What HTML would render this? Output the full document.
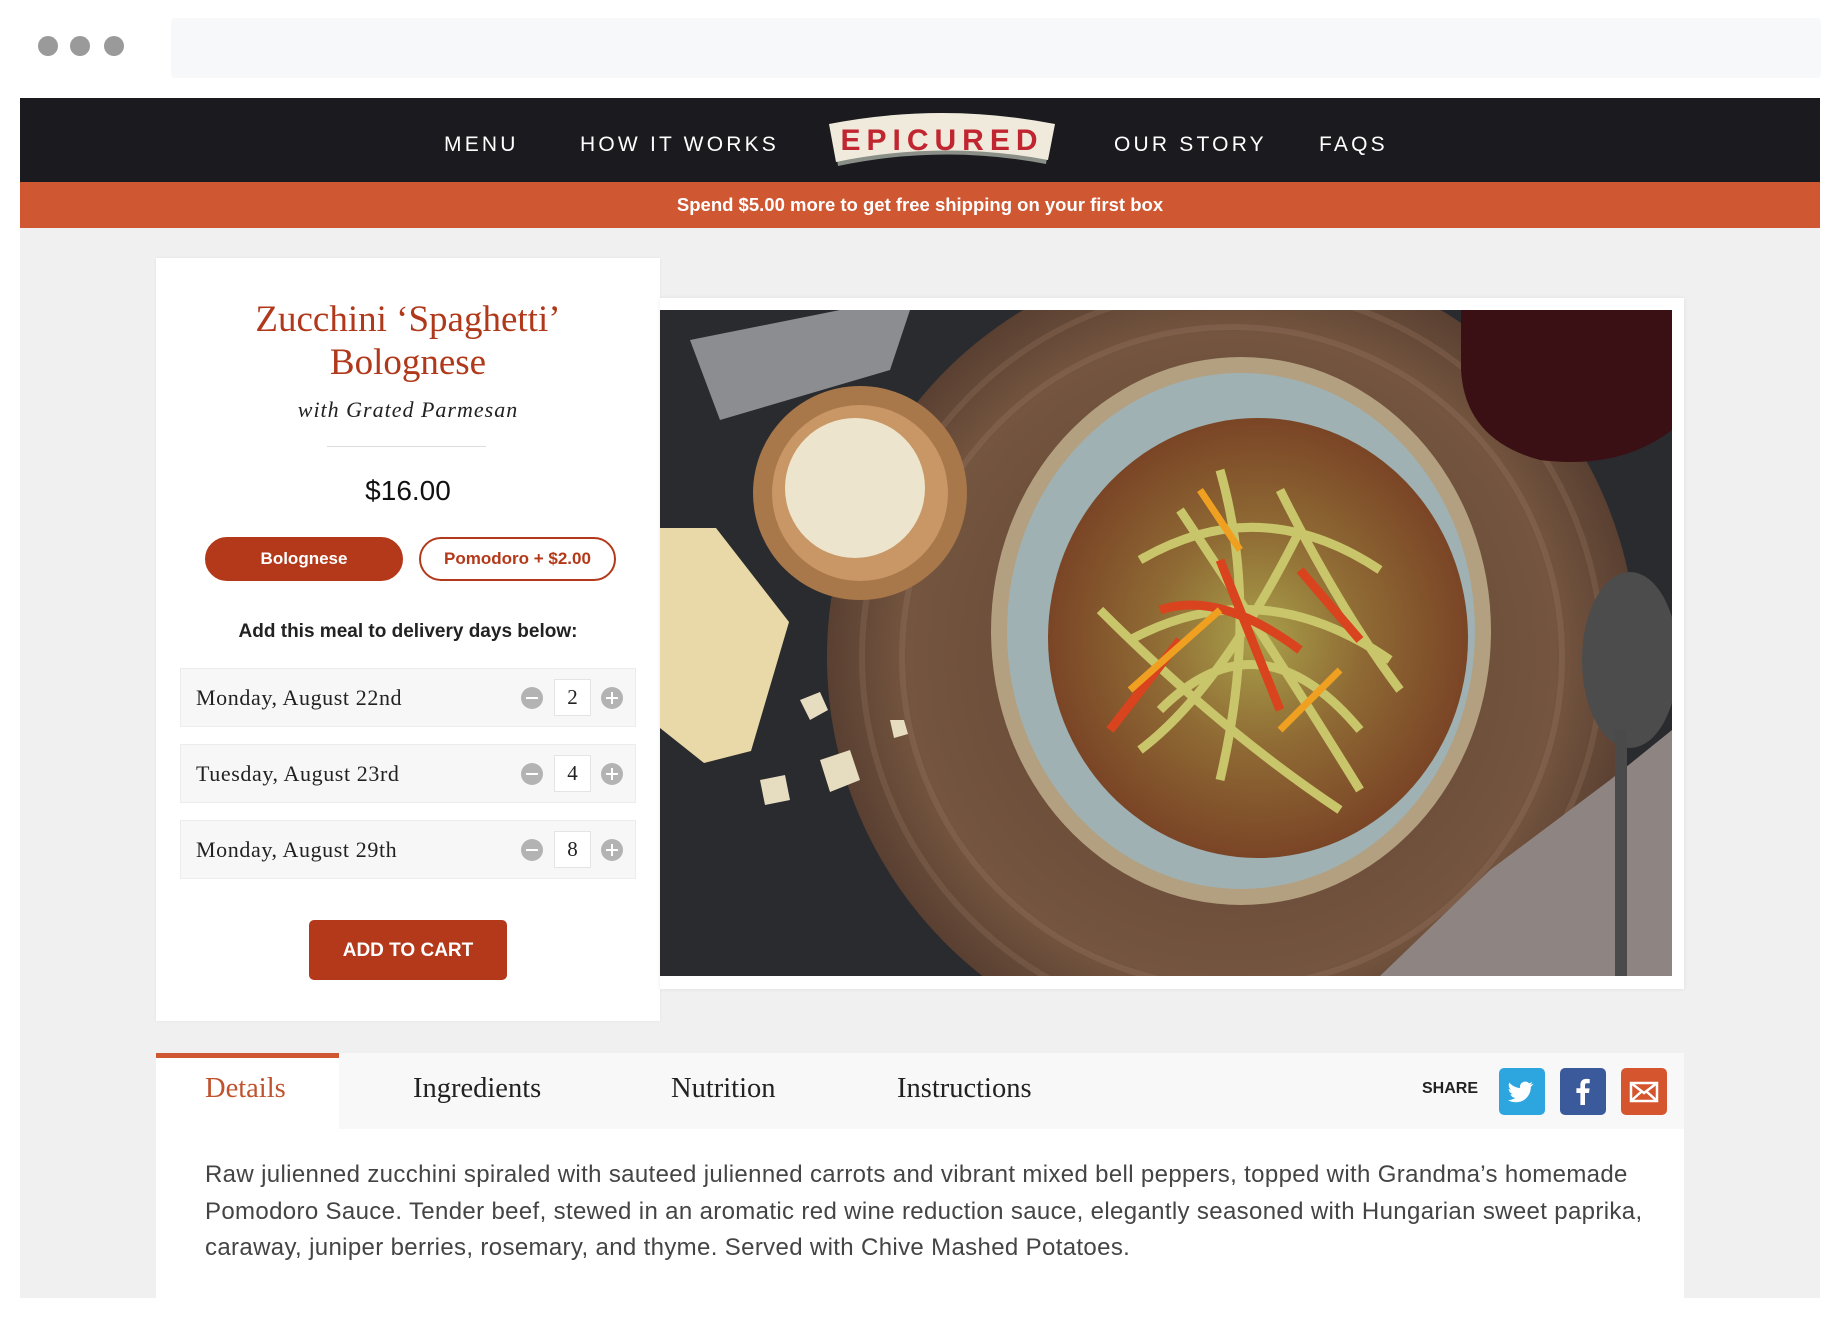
<!DOCTYPE html>
<html><head><meta charset="utf-8"><style>
*{margin:0;padding:0;box-sizing:border-box}
body{width:1840px;height:1320px;background:#fff;position:relative;overflow:hidden;font-family:"Liberation Sans","DejaVu Sans",sans-serif}
.abs{position:absolute}
.dot{position:absolute;top:36px;width:20px;height:20px;border-radius:50%;background:#9a9a9a}
.nav{left:20px;top:98px;width:1800px;height:84px;background:#1b1b1f}
.nl{position:absolute;top:133px;color:#fff;font-size:21px;letter-spacing:3.2px;line-height:24px}
.banner{left:20px;top:182px;width:1800px;height:46px;background:#cf5832;color:#fff;font-size:18.5px;font-weight:bold;text-align:center;line-height:46px}
.gray{left:20px;top:228px;width:1800px;height:1070px;background:#f0f0f0}
.card{left:156px;top:258px;width:504px;height:763px;background:#fff;box-shadow:0 0 3px rgba(0,0,0,.06)}
.serif{font-family:"Liberation Serif","DejaVu Serif",serif}
.title{left:156px;width:504px;text-align:center;color:#b0391b;font-size:37px;line-height:43px;top:298px}
.sub{left:156px;width:504px;text-align:center;top:397px;font-size:22px;font-style:italic;color:#222;letter-spacing:1px}
.price{left:156px;width:504px;text-align:center;top:475px;font-size:28px;color:#111}
.btn{position:absolute;top:537px;height:44px;border-radius:22px;font-weight:bold;font-size:17px;text-align:center;line-height:40px}
.row{position:absolute;left:180px;width:456px;height:59px;background:#f7f7f7;border:1px solid #ececec}
.row .d{position:absolute;left:15px;top:16px;font-size:22px;color:#222;letter-spacing:.6px}
.mi,.pl{position:absolute;top:18px;width:22px;height:22px;border-radius:50%;background:#b3b3b3}
.mi{left:340px}.pl{left:420px}
.mi:after,.pl:after{content:"";position:absolute;left:5px;top:10px;width:12px;height:2px;background:#fff}
.pl:before{content:"";position:absolute;left:10px;top:5px;width:2px;height:12px;background:#fff}
.q{position:absolute;left:373px;top:10px;width:37px;height:37px;background:#fff;border:1px solid #e4e4e4;text-align:center;line-height:35px;font-size:21px;color:#222}
.cart{left:309px;top:920px;width:198px;height:60px;background:#b3391a;border-radius:5px;color:#fff;font-weight:bold;font-size:19px;text-align:center;line-height:62px}
.frame{left:660px;top:298px;width:1024px;height:691px;background:#fff;box-shadow:0 0 4px rgba(0,0,0,.08)}
.panel{left:156px;top:1053px;width:1528px;height:245px;background:#fff}
.tabbar{left:156px;top:1053px;width:1528px;height:76px;background:#f8f8f8}
.tab{position:absolute;top:1073px;font-size:28.5px;color:#222;font-family:"Liberation Serif",serif}
.sh{position:absolute;top:1068px;width:46px;height:47px;border-radius:5px}
.para{left:205px;top:1157px;width:1470px;font-size:24px;letter-spacing:.35px;line-height:36.5px;color:#444}
</style></head><body>
<div class="dot" style="left:38px"></div><div class="dot" style="left:70px"></div><div class="dot" style="left:104px"></div>
<div class="abs" style="left:171px;top:18px;width:1650px;height:60px;background:#f7f8f9;border-radius:4px"></div>
<div class="abs nav"></div>
<div class="nl" style="left:444px">MENU</div>
<div class="nl" style="left:580px">HOW IT WORKS</div>
<div class="nl" style="left:1114px">OUR STORY</div>
<div class="nl" style="left:1319px">FAQS</div>
<svg class="abs" style="left:826px;top:110px" width="232" height="60" viewBox="0 0 232 60">
<path d="M6 16 Q116 -6 226 16 L220 54 Q116 34 12 56 Z" fill="#8a9088"/>
<path d="M3 14 Q116 -8 229 14 L222 50 Q116 30 10 52 Z" fill="#efeadb"/>
<text x="116" y="40" text-anchor="middle" font-family="Liberation Sans,sans-serif" font-weight="bold" font-size="30" letter-spacing="6" fill="#c02530">EPICURED</text>
</svg>
<div class="abs banner">Spend $5.00 more to get free shipping on your first box</div>
<div class="abs gray"></div>
<div class="abs card"></div>
<div class="abs title serif">Zucchini ‘Spaghetti’<br>Bolognese</div>
<div class="abs sub serif">with Grated Parmesan</div>
<div class="abs" style="left:327px;top:446px;width:159px;height:1px;background:#ddd"></div>
<div class="abs price">$16.00</div>
<div class="btn" style="left:205px;width:198px;background:#b3391a;color:#fff;border:2px solid #b3391a">Bolognese</div>
<div class="btn" style="left:419px;width:197px;background:#fff;color:#b3391a;border:2px solid #b3391a">Pomodoro + $2.00</div>
<div class="abs" style="left:156px;width:504px;text-align:center;top:621px;font-size:19px;font-weight:bold;color:#222">Add this meal to delivery days below:</div>
<div class="row" style="top:668px"><div class="d serif">Monday, August 22nd</div><div class="mi"></div><div class="q serif">2</div><div class="pl"></div></div>
<div class="row" style="top:744px"><div class="d serif">Tuesday, August 23rd</div><div class="mi"></div><div class="q serif">4</div><div class="pl"></div></div>
<div class="row" style="top:820px"><div class="d serif">Monday, August 29th</div><div class="mi"></div><div class="q serif">8</div><div class="pl"></div></div>
<div class="abs cart">ADD TO CART</div>
<div class="abs frame"></div>
<svg class="abs" style="left:660px;top:310px" width="1012" height="666" viewBox="0 0 1012 666">
<defs>
<radialGradient id="mat"><stop offset="0" stop-color="#5e4030"/><stop offset=".8" stop-color="#74553f"/><stop offset="1" stop-color="#5a4032"/></radialGradient>
<radialGradient id="food"><stop offset="0" stop-color="#a9a04a"/><stop offset=".5" stop-color="#8f6a34"/><stop offset="1" stop-color="#7a4526"/></radialGradient>
</defs>
<rect width="1012" height="666" fill="#2a2b2e"/>
<circle cx="572" cy="347" r="405" fill="url(#mat)"/>
<circle cx="572" cy="347" r="330" fill="none" stroke="#8a6a55" stroke-width="6" opacity=".5"/>
<circle cx="572" cy="347" r="370" fill="none" stroke="#8a6a55" stroke-width="6" opacity=".4"/>
<path d="M720 666 L830 560 L950 470 L1012 420 L1012 666 Z" fill="#8e8583"/>
<path d="M801 0 L1012 0 L1012 120 Q960 160 880 150 Q805 130 801 60 Z" fill="#3a1014"/>
<ellipse cx="970" cy="350" rx="48" ry="88" fill="#4c4c4c"/>
<rect x="955" y="420" width="12" height="246" fill="#4a4a4a"/>
<ellipse cx="581" cy="321" rx="250" ry="274" fill="#b3a080"/>
<ellipse cx="581" cy="321" rx="234" ry="258" fill="#9fb1b3"/>
<ellipse cx="598" cy="328" rx="210" ry="220" fill="url(#food)"/>
<path d="M480 250 Q600 180 720 260 M470 330 Q600 260 730 350 M500 400 Q600 300 700 420 M520 200 Q620 350 700 480 M440 300 Q560 420 680 500 M560 160 Q600 300 560 470 M620 180 Q680 300 740 380 M480 440 Q560 380 640 220" stroke="#c9c56a" stroke-width="9" fill="none"/>
<path d="M500 300 Q560 280 640 340 M560 250 L620 400 M450 420 L520 330 M640 260 L700 330" stroke="#d9441e" stroke-width="9" fill="none"/>
<path d="M470 380 L560 300 M620 420 L680 360 M540 180 L580 240" stroke="#f0a020" stroke-width="7" fill="none"/>
<path d="M30 30 L180 0 L250 0 L230 60 L60 110 Z" fill="#8b8d90"/>
<circle cx="200" cy="183" r="107" fill="#a8774a"/>
<circle cx="200" cy="183" r="88" fill="#c99765"/>
<circle cx="195" cy="178" r="70" fill="#ece4cc"/>
<path d="M0 218 L56 218 L129 312 L91 441 L44 453 L0 418 Z" fill="#e9d9a8"/>
<path d="M140 390 l20 -8 l8 18 l-18 10 Z M160 450 l30 -10 l10 30 l-30 12 Z M100 470 l25 -5 l5 25 l-25 5 Z M230 410 l14 0 l4 14 l-14 4Z" fill="#e6dcc0"/>
</svg>
<div class="abs panel"></div>
<div class="abs tabbar"></div>
<div class="abs" style="left:156px;top:1053px;width:183px;height:76px;background:#fff;border-top:5px solid #cf5832"></div>
<div class="tab" style="left:205px;color:#c0532e">Details</div>
<div class="tab" style="left:413px">Ingredients</div>
<div class="tab" style="left:671px">Nutrition</div>
<div class="tab" style="left:897px">Instructions</div>
<div class="abs" style="left:1422px;top:1080px;font-size:16px;font-weight:bold;color:#222">SHARE</div>
<div class="sh" style="left:1499px;background:#2da6e0"><svg width="46" height="47" viewBox="0 0 46 47"><path d="M34 16c-1 .5-2 .7-3 .8 1-.6 2-1.6 2.3-2.8-1 .6-2.1 1-3.3 1.3a5.2 5.2 0 0 0-8.9 4.7c-4.3-.2-8.1-2.300-10.7-5.4-1.4 2.4-.6 5.5 1.6 7-.8 0-1.600-.3-2.300-.7 0 2.5 1.8 4.7 4.2 5.2-.8.2-1.6.2-2.4.1.7 2.1 2.6 3.6 4.9 3.6A10.5 10.5 0 0 1 9 32c2.3 1.5 5 2.3 7.9 2.3 9.6 0 14.9-8 14.9-14.9v-.7c1-.7 1.9-1.6 2.6-2.7z" fill="#fff"/></svg></div>
<div class="sh" style="left:1560px;background:#3b5a9c"><svg width="46" height="47" viewBox="0 0 46 47"><path d="M25 37V25h4l.6-4.6H25v-3c0-1.3.4-2.2 2.3-2.2h2.4v-4.1c-.4 0-1.8-.2-3.5-.2-3.5 0-5.8 2.1-5.8 6v3.4h-4V25h4v12z" fill="#fff"/></svg></div>
<div class="sh" style="left:1621px;background:#d4552e"><svg width="46" height="47" viewBox="0 0 46 47"><rect x="10" y="15" width="26" height="18" fill="none" stroke="#fff" stroke-width="2.5"/><path d="M10 15l13 10 13-10M10 33l10-9M36 33l-10-9" stroke="#fff" stroke-width="2.5" fill="none"/></svg></div>
<div class="abs para">Raw julienned zucchini spiraled with sauteed julienned carrots and vibrant mixed bell peppers, topped with Grandma’s homemade Pomodoro Sauce. Tender beef, stewed in an aromatic red wine reduction sauce, elegantly seasoned with Hungarian sweet paprika, caraway, juniper berries, rosemary, and thyme. Served with Chive Mashed Potatoes.</div>
</body></html>
